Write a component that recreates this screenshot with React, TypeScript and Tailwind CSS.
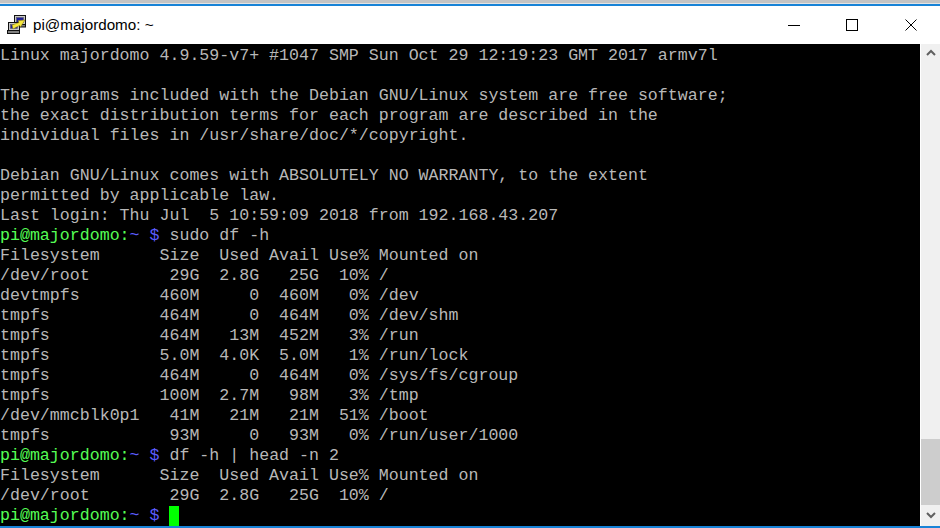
const g = "text-[#b8b8b8]";

function Prompt({ cmd }: { cmd?: string }) {
  return (
    <>
      <span className="text-[#55ff55]">pi@majordomo:</span>
      <span className="text-[#5c5cff]">~ $</span>
      {cmd ? <span className={g}> {cmd}</span> : <span> </span>}
    </>
  );
}

const before = [
  "Linux majordomo 4.9.59-v7+ #1047 SMP Sun Oct 29 12:19:23 GMT 2017 armv7l",
  "",
  "The programs included with the Debian GNU/Linux system are free software;",
  "the exact distribution terms for each program are described in the",
  "individual files in /usr/share/doc/*/copyright.",
  "",
  "Debian GNU/Linux comes with ABSOLUTELY NO WARRANTY, to the extent",
  "permitted by applicable law.",
  "Last login: Thu Jul  5 10:59:09 2018 from 192.168.43.207",
];

const table = [
  "Filesystem      Size  Used Avail Use% Mounted on",
  "/dev/root        29G  2.8G   25G  10% /",
  "devtmpfs        460M     0  460M   0% /dev",
  "tmpfs           464M     0  464M   0% /dev/shm",
  "tmpfs           464M   13M  452M   3% /run",
  "tmpfs           5.0M  4.0K  5.0M   1% /run/lock",
  "tmpfs           464M     0  464M   0% /sys/fs/cgroup",
  "tmpfs           100M  2.7M   98M   3% /tmp",
  "/dev/mmcblk0p1   41M   21M   21M  51% /boot",
  "tmpfs            93M     0   93M   0% /run/user/1000",
];

const head = [
  "Filesystem      Size  Used Avail Use% Mounted on",
  "/dev/root        29G  2.8G   25G  10% /",
];

function Line({ children }: { children?: React.ReactNode }) {
  return <div className={`h-5 leading-5 ${g}`}>{children}</div>;
}

function PuttyIcon() {
  return (
    <svg width="20" height="20" viewBox="0 0 20 20" className="shrink-0">
      {/* back monitor */}
      <rect x="7.5" y="0.5" width="11" height="9" fill="#c8c8c8" stroke="#111" />
      <rect x="9.5" y="2.5" width="7" height="5" fill="#1c1c9c" stroke="#555" strokeWidth="0.5" />
      <rect x="7.5" y="9.5" width="11" height="2.5" fill="#808080" stroke="#111" />
      {/* front monitor */}
      <rect x="1.5" y="7.5" width="11" height="8" fill="#c8c8c8" stroke="#111" />
      <rect x="3.5" y="9.5" width="7" height="4" fill="#1c1c9c" stroke="#555" strokeWidth="0.5" />
      <rect x="0.5" y="15.5" width="12" height="3" fill="#808080" stroke="#111" />
      {/* bolt */}
      <path d="M18 5 L11 5.5 L12 7.5 L5 10 L6 14 L12.5 10.5 L13.5 12 Z" fill="#f6e83c" stroke="#7a6a10" strokeWidth="0.5" />
    </svg>
  );
}

function WindowButtons() {
  return (
    <div className="flex items-center pr-[6px]">
      <div className="w-[46px] flex justify-center">
        <div className="w-3 h-px bg-black" />
      </div>
      <div className="w-[46px] ml-[12px] flex justify-center">
        <div className="w-3 h-3 border border-black" />
      </div>
      <div className="w-[46px] ml-[13px] flex justify-center">
        <svg width="12" height="12" viewBox="0 0 12 12" stroke="#000" fill="none">
          <path d="M0.5 0.5 L11.5 11.5 M11.5 0.5 L0.5 11.5" />
        </svg>
      </div>
    </div>
  );
}

function Scrollbar() {
  return (
    <div className="w-[19px] ml-px bg-[#f0f0f0] flex flex-col justify-between">
      <div className="h-[17px] flex items-center justify-center">
        <svg width="10" height="7" viewBox="0 0 10 7" fill="none" stroke="#606060" strokeWidth="2">
          <path d="M1 6 L5 2 L9 6" />
        </svg>
      </div>
      <div className="flex flex-col">
        <div className="h-[66px] bg-[#cdcdcd]" />
        <div className="h-[21px] flex items-center justify-center">
          <svg width="10" height="7" viewBox="0 0 10 7" fill="none" stroke="#606060" strokeWidth="2">
            <path d="M1 1 L5 5 L9 1" />
          </svg>
        </div>
      </div>
    </div>
  );
}

export default function App() {
  return (
    <div className="w-[940px] h-[528px] overflow-hidden flex flex-col bg-white">
      <div className="h-[3px] bg-[#c4c4c4]" />
      <div className="h-px bg-[#e4e4e4]" />
      <div className="h-[2px] bg-[#1883d7]" />
      <div className="h-[38px] flex items-center justify-between">
        <div className="flex items-center pl-[7px] gap-[6px]">
          <PuttyIcon />
          <span className="text-[15.2px] text-[#000000] font-['Liberation_Sans',sans-serif]">pi@majordomo: ~</span>
        </div>
        <WindowButtons />
      </div>
      <div className="flex-1 flex min-h-0">
        <div className="w-[920px] pt-[2px] bg-black font-['Liberation_Mono',monospace] text-[16.62px] whitespace-pre overflow-hidden">
          {before.map((l, i) => (
            <Line key={i}>{l}</Line>
          ))}
          <Line>
            <Prompt cmd="sudo df -h" />
          </Line>
          {table.map((l, i) => (
            <Line key={i}>{l}</Line>
          ))}
          <Line>
            <Prompt cmd="df -h | head -n 2" />
          </Line>
          {head.map((l, i) => (
            <Line key={i}>{l}</Line>
          ))}
          <div className="h-5 leading-5 flex">
            <span>
              <Prompt />
            </span>
            <span className="w-[10px] h-5 bg-[#00ff00]" />
          </div>
        </div>
        <Scrollbar />
      </div>
      <div className="h-[2px] bg-[#1883d7]" />
    </div>
  );
}
